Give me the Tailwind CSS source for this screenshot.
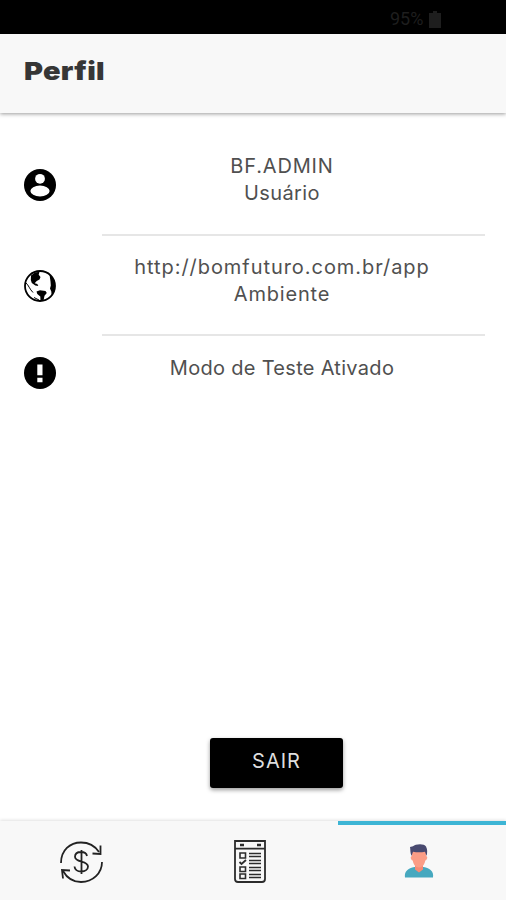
<!DOCTYPE html>
<html lang="pt-BR">
<head>
    <meta charset="UTF-8">
    <meta name="viewport" content="width=device-width, initial-scale=1.0">
    <title>Perfil</title>
    <script src="https://cdn.jsdelivr.net/npm/@tailwindcss/browser@4"></script>
</head>
<body class="h-[900px] w-[506px] overflow-hidden bg-white font-['Inter',sans-serif] text-[#505050] flex flex-col">
    <!-- Barra de status -->
    <div class="h-[34px] shrink-0 bg-black flex items-center pt-1 pl-[390px] gap-[6px] text-[#1e1e1e]">
        <span class="font-['Roboto',sans-serif] text-[18px] leading-none">95%</span>
        <svg class="w-3 h-[17px]" viewBox="0 0 12 17" fill="currentColor">
            <path d="M4 0h4v2h4v15H0V2h4z"/>
        </svg>
    </div>

    <!-- Cabeçalho -->
    <header class="relative h-[79px] shrink-0 bg-[#f8f8f8] shadow-[0_1px_4px_rgba(0,0,0,0.4)] px-6 pb-[6px] flex items-center">
        <h1 class="origin-left scale-x-[1.16] text-[25px] leading-8 font-black tracking-[0.2px] text-[#363636]">Perfil</h1>
    </header>

    <main class="grow flex flex-col">
        <div class="pt-[23px] pl-6 pr-[21px]">
            <div class="flex h-[100px]">
                <div class="w-[78px] shrink-0 pt-[33px]">
                    <svg class="w-8 h-8" viewBox="0 0 32 32">
                        <circle cx="16" cy="16" r="16" fill="#000"/>
                        <circle cx="16" cy="9.8" r="4.9" fill="#fff"/>
                        <ellipse cx="16" cy="22" rx="9.6" ry="5.4" fill="#fff"/>
                    </svg>
                </div>
                <div class="grow border-b-2 border-[#e6e6e6] pt-[17px] pr-[23px] text-center text-[20px] leading-[27px]">
                    <p class="tracking-[0.85px]">BF.ADMIN</p>
                    <p class="tracking-[0.4px]">Usuário</p>
                </div>
            </div>
            <div class="flex h-[100px]">
                <div class="w-[78px] shrink-0 pt-[34px]">
                    <svg class="w-8 h-8" viewBox="0 0 32 32">
                        <circle cx="16" cy="16" r="15" fill="#fff" stroke="#000" stroke-width="1.8"/>
                        <path d="M7 5.500 11 2.500l4.500-.8-.8 3 1.800 2.300-1 2.500-2.800 1.500-2 2.200 2.600.8 1 2-3-.4-3.500-2.600-1-3z"/>
                        <path d="m12.500 21.500 3.500-1.300 5.500.8 1.300 2-2.300 2.800-1 4.700-3 .5-.2-4.500-3-2.500z"/>
                        <path d="M25.500 4.500c3.800 3 5.700 7 5.500 11.500-.1 3.800-1.300 6.500-3.400 9l-.3-3.500-1.300-3 .8-3-.3-4z"/>
                        <path d="M2 13c2.500 2 3.500 6 7 9.500M10 27.500l5 2.500" fill="none" stroke="#000" stroke-width="1"/>
                    </svg>
                </div>
                <div class="grow border-b-2 border-[#e6e6e6] pt-[18px] pr-[23px] text-center text-[20px] leading-[27px]">
                    <p class="tracking-[0.95px]">http://bomfuturo.com.br/app</p>
                    <p class="tracking-[0.8px]">Ambiente</p>
                </div>
            </div>
            <div class="flex h-[70px]">
                <div class="w-[78px] shrink-0 pt-[21px]">
                    <svg class="w-8 h-8" viewBox="0 0 32 32">
                        <circle cx="16" cy="16" r="16" fill="#000"/>
                        <path d="M13.300 7.500h5.200v10.800h-5.200zM13.300 20.800h5.200v4.400h-5.200z" fill="#fff"/>
                    </svg>
                </div>
                <div class="grow pt-[19px] pr-[23px] text-center text-[20px] leading-[27px]">
                    <p class="tracking-[0.3px]">Modo de Teste Ativado</p>
                </div>
            </div>
        </div>

        <div class="mt-auto mb-[33px] pl-[47px] flex justify-center">
            <button class="h-[50px] w-[133px] rounded-[3px] bg-black pb-1 text-[20px] tracking-[1px] text-[#dedede] shadow-[0_2px_4px_rgba(0,0,0,0.4)]">SAIR</button>
        </div>
    </main>

    <!-- Abas -->
    <nav class="h-[79px] shrink-0 bg-[#f8f8f8] shadow-[0_-1px_3px_rgba(0,0,0,0.12)] grid grid-cols-[169px_169px_168px]">
        <a class="flex items-start pt-[17px] pl-[59px]">
            <svg class="w-[45px] h-[46px]" viewBox="0 0 45 46" fill="none" stroke="#222" stroke-width="1.800">
                <path d="M2 25C2 12 11 4.500 22 4.500c8 0 14 3.500 18 9.500M43 24c0 11-9 20-21 20-8 0-14-4-18-11"/>
                <path d="M41.500 7.500V16l-8-.5M4 40.500 3 32l8 .5"/>
                <path d="M28 18c-.5-3-3-4-6-4-4 0-6 2-6 4.700 0 6.300 13 3.300 13 9.800 0 3-3 5-6.500 5-4 0-6.700-2-7-5M22.500 12v24"/>
            </svg>
        </a>
        <a class="flex items-start pt-[19px] pl-[65px]">
            <svg class="w-8 h-[43px]" viewBox="0 0 32 43" fill="none" stroke="#2c2c2c" stroke-width="1.800">
                <path d="M1 1h30v38q0 3-3 3H4q-3 0-3-3zM1 8.700h30"/>
                <path d="M6 5h4M23 5h4" stroke-width="2.400"/>
                <path d="M6 13h5.500v5H6zM6 27h5.500v4.500H6zM6 34h5.500v4.500H6z" stroke-width="1.600"/>
                <path d="m5.500 22 2 2 4.500-4" stroke-width="1.800"/>
                <path d="M15 13.500h12M15 16.500h12M15 20.500h12M15 23.500h12M15 27.500h12M15 30.500h12M15 34.500h12M15 37.500h12" stroke-width="1.400"/>
            </svg>
        </a>
        <a class="flex items-start border-t-4 border-[#3db5d5] pt-[18px] pl-[66px]">
            <svg class="w-[30px] h-[35px]" viewBox="0 0 30 35">
                <path d="M1 34.500c-1-6 3-9.500 9.500-10.500h9C26 25 30 28.500 29 34.500z" fill="#46a8bf"/>
                <path d="M11 21h8v5.500l-4 3-4-3z" fill="#f58b76"/>
                <path d="M8 6h14v7c2 0 1.500 4-.7 4.500C20.500 21.500 18.500 24.500 15 24.500S9.500 21.500 8.700 17.500C6.500 17 6 13 8 13z" fill="#fb9d86"/>
                <path d="M7.500 13C6 10 6.500 6 6 4l3-.7C11 1 20 0 22 3.500c1.500 3 1.500 6 .5 9.500l-1.500-4.300c-4 .8-8 .8-12 0z" fill="#48496f"/>
            </svg>
        </a>
    </nav>
</body>
</html>
